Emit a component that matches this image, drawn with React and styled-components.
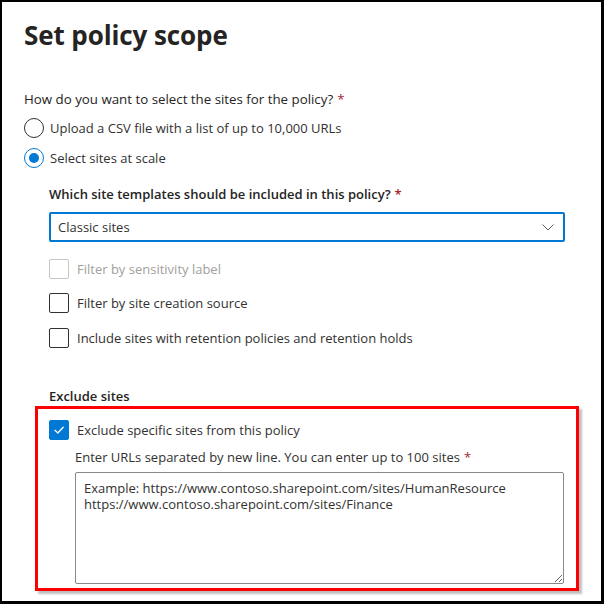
import React from "react";
import styled, { createGlobalStyle } from "styled-components";

const Global = createGlobalStyle`
  html, body { margin: 0; padding: 0; background: #fff; }
  body { font-family: "Open Sans", "Noto Sans", sans-serif; color: #323130; }
  * { box-sizing: border-box; }
`;

const Frame = styled.div`
  width: 604px;
  height: 604px;
  border: 2px solid #000;
  border-right-width: 3px;
  border-bottom-width: 3px;
  background: #fff;
  overflow: hidden;
  padding: 0 0 0 22px;
`;

const Title = styled.h1`
  margin: 16px 0 0;
  font-size: 26px;
  font-weight: 700;
  line-height: 34px;
  color: #252423;
  letter-spacing: -0.1px;
`;

const Question = styled.div`
  margin-top: 37px;
  font-size: 13.3px;
  line-height: 20px;
  color: #252423;
`;

const Req = styled.span`
  color: #a4262c;
  margin-left: 4px;
`;

const OptionRow = styled.label`
  display: flex;
  align-items: center;
  gap: ${(p) => p.$gap || 6}px;
  height: 20px;
  margin-top: ${(p) => p.$mt || 0}px;
  font-size: 13px;
  color: ${(p) => (p.$disabled ? "#a19f9d" : "#323130")};
`;

const Radio = styled.span`
  width: 20px;
  height: 20px;
  border-radius: 50%;
  border: 1px solid ${(p) => (p.$checked ? "#0078d4" : "#323130")};
  display: flex;
  align-items: center;
  justify-content: center;
  flex: none;
  &::after {
    content: "";
    width: 10px;
    height: 10px;
    border-radius: 50%;
    background: #0078d4;
    display: ${(p) => (p.$checked ? "block" : "none")};
  }
`;

const Box = styled.span`
  width: 20px;
  height: 20px;
  border-radius: 2px;
  flex: none;
  border: 1px solid ${(p) => (p.$checked ? "#0078d4" : p.$disabled ? "#c8c6c4" : "#323130")};
  background: ${(p) => (p.$checked ? "#0078d4" : "#fff")};
  display: flex;
  align-items: center;
  justify-content: center;
`;

const Section = styled.div`
  margin-left: 25px;
`;

const SubLabel = styled.div`
  margin-top: ${(p) => p.$mt}px;
  font-size: 13px;
  line-height: 20px;
  font-weight: 600;
  color: #252423;
`;

const Dropdown = styled.div`
  margin-top: 8px;
  width: 516px;
  height: 30px;
  border: 2px solid #0078d4;
  border-radius: 2px;
  display: flex;
  align-items: center;
  justify-content: space-between;
  padding: 0 9px 0 7px;
  font-size: 13px;
`;

const Highlight = styled.div`
  margin: 0 0 0 -14px;
  width: 544px;
  height: 185px;
  border: 3px solid #ff0000;
  box-shadow: 3px 3px 2px rgba(0, 0, 0, 0.25);
  padding: 11px 11px 0 11px;
`;

const Hint = styled.div`
  margin: 7px 0 0 26px;
  font-size: 13px;
  line-height: 20px;
`;

const Area = styled.textarea`
  display: block;
  margin: 5px 0 0 26px;
  width: 489px;
  height: 112px;
  border: 1px solid #8a8886;
  border-radius: 2px;
  padding: 7px 8px;
  font-family: "Open Sans", "Noto Sans", sans-serif;
  font-size: 13px;
  line-height: 16px;
  color: #323130;
  resize: both;
  &::placeholder {
    color: #323130;
    opacity: 1;
  }
`;

const Check = () => (
  <svg width="12" height="12" viewBox="0 0 12 12" fill="none">
    <path d="M2 6.3 L4.8 9 L10.2 3.2" stroke="#fff" strokeWidth="1.3" strokeLinecap="round" strokeLinejoin="round" />
  </svg>
);

const Chevron = () => (
  <svg width="12" height="7" viewBox="0 0 12 7" fill="none">
    <path d="M0.5 0.5 L6 6 L11.5 0.5" stroke="#605e5c" strokeWidth="1" />
  </svg>
);

export default function App() {
  return (
    <>
      <Global />
      <Frame>
        <Title>Set policy scope</Title>
        <Question>
          How do you want to select the sites for the policy?<Req>*</Req>
        </Question>
        <OptionRow $mt={9}>
          <Radio />
          Upload a CSV file with a list of up to 10,000 URLs
        </OptionRow>
        <OptionRow $mt={10}>
          <Radio $checked />
          Select sites at scale
        </OptionRow>
        <Section>
          <SubLabel $mt={16}>
            Which site templates should be included in this policy?<Req>*</Req>
          </SubLabel>
          <Dropdown>
            <span>Classic sites</span>
            <Chevron />
          </Dropdown>
          <OptionRow $mt={17} $disabled $gap={8}>
            <Box $disabled />
            Filter by sensitivity label
          </OptionRow>
          <OptionRow $mt={14} $gap={8}>
            <Box />
            Filter by site creation source
          </OptionRow>
          <OptionRow $mt={15} $gap={8}>
            <Box />
            Include sites with retention policies and retention holds
          </OptionRow>
          <SubLabel $mt={38}>Exclude sites</SubLabel>
          <Highlight>
            <OptionRow $gap={8}>
              <Box $checked>
                <Check />
              </Box>
              Exclude specific sites from this policy
            </OptionRow>
            <Hint>
              Enter URLs separated by new line. You can enter up to 100 sites<Req>*</Req>
            </Hint>
            <Area
              placeholder={
                "Example: https://www.contoso.sharepoint.com/sites/HumanResource\nhttps://www.contoso.sharepoint.com/sites/Finance"
              }
            />
          </Highlight>
        </Section>
      </Frame>
    </>
  );
}
